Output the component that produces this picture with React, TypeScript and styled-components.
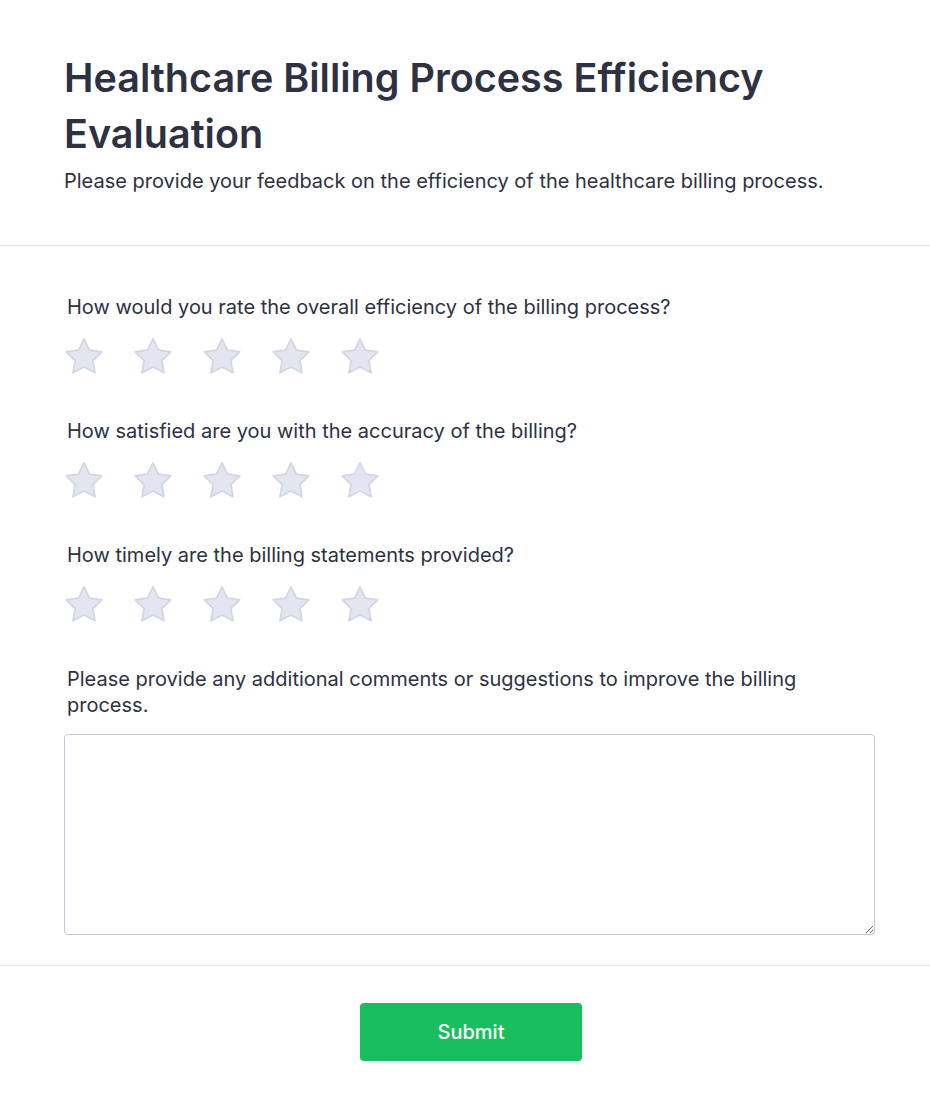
import styled, { createGlobalStyle } from "styled-components";

const GlobalStyle = createGlobalStyle`
  body {
    margin: 0;
    background: #ffffff;
    font-family: Inter, "Noto Sans", sans-serif;
    color: #2d3142;
  }
`;

const questions = [
  "How would you rate the overall efficiency of the billing process?",
  "How satisfied are you with the accuracy of the billing?",
  "How timely are the billing statements provided?",
];

function Star() {
  return (
    <StarIcon viewBox="1.6 1.8 20.8 20.8">
      <path
        d="M12 2.8l2.85 5.8 6.4.93-4.63 4.5 1.09 6.37L12 17.4l-5.71 3 1.09-6.37-4.63-4.5 6.4-.93z"
        strokeLinejoin="round"
      />
    </StarIcon>
  );
}

export default function App() {
  return (
    <Page>
      <GlobalStyle />
      <Header>
        <Title>Healthcare Billing Process Efficiency Evaluation</Title>
        <Subtitle>Please provide your feedback on the efficiency of the healthcare billing process.</Subtitle>
      </Header>
      <Body>
        {questions.map((q) => (
          <Question key={q}>
            <Label>{q}</Label>
            <Stars>
              {[1, 2, 3, 4, 5].map((n) => (
                <StarButton key={n} type="button" aria-label={`${n} stars`}>
                  <Star />
                </StarButton>
              ))}
            </Stars>
          </Question>
        ))}
        <Question>
          <Label>Please provide any additional comments or suggestions to improve the billing process.</Label>
          <TextArea />
        </Question>
      </Body>
      <Footer>
        <SubmitButton type="button">Submit</SubmitButton>
      </Footer>
    </Page>
  );
}

const Page = styled.div`
  background: #fff;
  min-height: 1112px;
`;

const Header = styled.header`
  padding: 50px 64px 50px;
  border-bottom: 1px solid #e0e1e8;
`;

const Title = styled.h1`
  margin: 0;
  font-size: 39.5px;
  line-height: 56px;
  font-weight: 600;
  color: #2d3142;
`;

const Subtitle = styled.p`
  margin: 5px 0 0;
  font-size: 20px;
  line-height: 28px;
  color: #2d3142;
`;

const Body = styled.main`
  padding: 48px 55px 30px 64px;
  display: flex;
  flex-direction: column;
  gap: 41px;
  border-bottom: 1px solid #e8e9ef;
`;

const Question = styled.section`
  display: flex;
  flex-direction: column;
`;

const Label = styled.label`
  font-size: 20px;
  line-height: 26px;
  font-weight: 400;
  color: #2d3142;
  padding: 0 3px;
  margin-bottom: 16px;
`;

const Stars = styled.div`
  display: flex;
  gap: 29px;
  margin-top: 1px;
`;

const StarButton = styled.button`
  border: 0;
  background: none;
  padding: 0;
  width: 40px;
  height: 40px;
  cursor: pointer;
`;

const StarIcon = styled.svg`
  width: 40px;
  height: 40px;
  display: block;
  fill: #e3e6f0;
  stroke: #d2d6e3;
  stroke-width: 0.9;
`;

const TextArea = styled.textarea`
  box-sizing: border-box;
  width: 100%;
  height: 201px;
  border: 1px solid #c5c7d8;
  border-radius: 4px;
  font-family: inherit;
  font-size: 16px;
  padding: 8px 10px;
`;

const Footer = styled.footer`
  display: flex;
  justify-content: center;
  padding: 37px 0 50px 12px;
`;

const SubmitButton = styled.button`
  width: 222px;
  height: 58px;
  border: 0;
  border-radius: 4px;
  background: #1abe5e;
  color: #fff;
  font-family: inherit;
  font-size: 20px;
  font-weight: 500;
  cursor: pointer;
`;
